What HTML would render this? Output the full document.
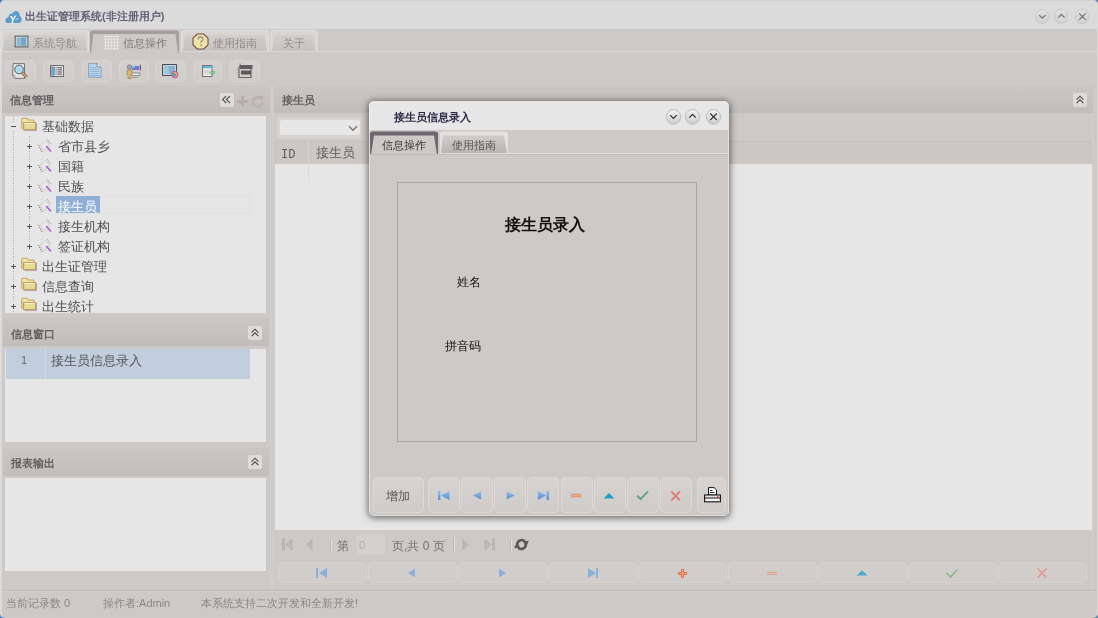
<!DOCTYPE html>
<html><head><meta charset="utf-8">
<style>
*{box-sizing:border-box;margin:0;padding:0}
html,body{width:1098px;height:618px;overflow:hidden;background:#4f7fb3;font-family:"Liberation Sans",sans-serif;}
.a{position:absolute}
svg{position:absolute;overflow:visible}
#win{position:absolute;left:0;top:0;width:1098px;height:618px;background:#cdc9c7;border-radius:5px;overflow:hidden;will-change:transform}
#title{position:absolute;left:0;top:0;width:1098px;height:29px;background:#dbdbdb;border-top:1px solid #d0d0d0}
.ttl{position:absolute;left:25px;top:8px;font-size:11px;font-weight:bold;color:#646276;letter-spacing:0px;white-space:nowrap}
.wc{position:absolute;width:14px;height:14px;border-radius:50%;background:linear-gradient(#e4e4e4,#d6d6d6 55%,#dadada);border:1px solid #c9c9c9;box-shadow:0 1px 1px rgba(0,0,0,.08)}
.tab{position:absolute;font-size:11px;white-space:nowrap}
.tb{position:absolute;top:60px;height:22px;border-radius:5px;background:linear-gradient(#d4d1cf,#cfcccb);border:1px solid #d6d3d1}
.ph{position:absolute;height:27px;background:linear-gradient(#cac6c4,#c1bdbb);}
.ph span{position:absolute;left:8px;top:7px;font-size:11px;font-weight:bold;color:#606060;white-space:nowrap}
.pb{position:absolute;background:#e6e6e6}
.cb{position:absolute;width:14px;height:14px;border-radius:2px;background:#dedcdb}
.sel{color:#fff!important}
.node{position:absolute;font-size:13px;color:#4f4f4f;white-space:nowrap;line-height:14px}
.exp{position:absolute;font-size:11px;color:#555;line-height:10px}
.st{position:absolute;top:596px;font-size:11px;color:#888;white-space:nowrap}
.bb{position:absolute;top:562px;width:89px;height:21px;border-radius:5px;background:#d0cdcb;border:1px solid #d6d3d1}
.mb{position:absolute;top:376px;height:36px;border-radius:5px;background:linear-gradient(#d6d3d1,#cfcbc9);border:1px solid #dcd9d7}
.mc{position:absolute;width:15px;height:15px;border-radius:50%;background:linear-gradient(#f0f0f0,#e2e2e2 50%,#d2d2d2);border:1px solid #bdbdbd;box-shadow:0 1px 1px rgba(0,0,0,.12)}
</style></head><body>
<div id="win">
  <!-- title bar -->
  <div id="title">
    <svg style="left:5px;top:8.5px" width="17" height="14" viewBox="0 0 17 14">
      <path d="M2.5 13 C0.5 13 0 10.5 0.8 9 C1.3 7.8 2.5 7.3 3.3 7.5 C3.5 5 5.3 3.4 7.5 3.6 C8.3 1.5 10.5 0.5 12.5 1.5 C14.5 2.5 15 4.5 14.8 6 C16.5 6.8 17 9 16.5 10.8 C16 12.3 15 13 13.5 13 Z" fill="#5b9ccb"/>
      <path d="M5 6 L7.2 9.5 L6.3 13 L8 13 L8.8 9.5 L11.5 5.5 L9.8 5.5 L8.2 8.2 L6.9 6 Z" fill="#f2f6fa"/>
      <path d="M10.5 9 L13.5 8 L13.5 9.2 L10.5 10 Z" fill="#cfe2f0" opacity=".8"/>
    </svg>
    <div class="ttl">出生证管理系统(非注册用户)</div>
    <div class="wc" style="left:1035px;top:8px"></div>
    <div class="wc" style="left:1054px;top:8px"></div>
    <div class="wc" style="left:1075px;top:8px"></div>
    <svg style="left:1035px;top:8px" width="60" height="15" viewBox="0 0 60 15">
      <path d="M4.2 6.2 L7.4 9.2 L10.6 6.2" fill="none" stroke="#6e6e6e" stroke-width="1.1"/>
      <path d="M23.2 8.6 L26.4 5.4 L29.6 8.6" fill="none" stroke="#6e6e6e" stroke-width="1.1"/>
      <path d="M44.2 4.4 L50.6 10.8 M50.6 4.4 L44.2 10.8" fill="none" stroke="#6e6e6e" stroke-width="1.1"/>
    </svg>
  </div>
  <!-- window side borders -->
  <div class="a" style="left:0;top:29px;width:2px;height:589px;background:#dcdada"></div>
  <!-- tabs -->
  <svg style="left:0;top:29px" width="330" height="25" viewBox="0 0 330 25">
    <!-- tab1 -->
    <path d="M1.5 22 L1.5 4 Q1.5 1.5 4 1.5 L86 1.5 Q88.5 1.5 88.5 4 L88.5 22 Z" fill="#d9d5d3" stroke="#e2dfdd" stroke-width="1"/>
    <path d="M5 6 L84.5 6 L87 22 L2.5 22 Z" fill="url(#gi)"/>
    <!-- tab3 -->
    <path d="M181.5 22 L181.5 4 Q181.5 1.5 184 1.5 L266 1.5 Q268.5 1.5 268.5 4 L268.5 22 Z" fill="#d9d5d3" stroke="#e2dfdd" stroke-width="1"/>
    <path d="M185 6 L264.5 6 L267 22 L182.5 22 Z" fill="url(#gi)"/>
    <!-- tab4 -->
    <path d="M271 22 L271 4 Q271 1.5 273.5 1.5 L314.5 1.5 Q317 1.5 317 4 L317 22 Z" fill="#d9d5d3" stroke="#e2dfdd" stroke-width="1"/>
    <path d="M274.5 6 L313 6 L315.5 22 L272 22 Z" fill="url(#gi)"/>
    <!-- tab2 active -->
    <path d="M90 24 L90 4.5 Q90 1.5 93 1.5 L176 1.5 Q179 1.5 179 4.5 L179 24 Z" fill="#a49f9e"/>
    <path d="M93.5 5 L175.5 5 L178.2 25 L90.8 25 Z" fill="#cdc9c7"/>
    <defs>
      <linearGradient id="gi" x1="0" y1="0" x2="0" y2="1"><stop offset="0" stop-color="#d2cecc"/><stop offset="1" stop-color="#c6c2c0"/></linearGradient>
    </defs>
  </svg>
  <div class="a" style="left:2px;top:51px;width:88px;height:1px;background:#dcd8d6"></div>
  <div class="a" style="left:179px;top:51px;width:918px;height:1px;background:#dcd8d6"></div>
  <!-- tab icons -->
  <svg style="left:14px;top:35px" width="15" height="13" viewBox="0 0 15 13">
    <rect x="0.7" y="0.7" width="13.6" height="11.6" fill="#3e3e3e"/>
    <rect x="1.6" y="1.6" width="11.8" height="9.8" fill="#fafafa"/>
    <rect x="2.4" y="2.4" width="10.4" height="8.4" fill="#8fb8d2"/>
    <rect x="7.5" y="2.4" width="5.3" height="8.4" fill="#6d9db9" opacity=".7"/>
    <rect x="12.2" y="2" width="1" height="9" fill="#a8dcf6"/>
  </svg>
  <div class="tab" style="left:33px;top:36px;color:#8e8c8b">系统导航</div>
  <svg style="left:104px;top:35px" width="15" height="15" viewBox="0 0 15 15">
    <g stroke="#e4e4e4" stroke-width="1.1" opacity=".9">
      <path d="M1.5 0 V15 M4.5 0 V15 M7.5 0 V15 M10.5 0 V15 M13.5 0 V15 M0 1.5 H15 M0 4.5 H15 M0 7.5 H15 M0 10.5 H15 M0 13.5 H15"/>
    </g>
  </svg>
  <div class="tab" style="left:123px;top:36px;color:#7a7878">信息操作</div>
  <svg style="left:192px;top:33px" width="17" height="17" viewBox="0 0 17 17">
    <path d="M5.2 1 H11.8 L16 5.2 V11.8 L11.8 16 H5.2 L1 11.8 V5.2 Z" fill="#f1e2a6" stroke="#6e4a44" stroke-width="1.1"/>
    <path d="M6 6.5 Q6 4 8.5 4 Q11 4 11 6.3 Q11 7.8 9.2 8.6 L9.2 10" fill="none" stroke="#aaa7a0" stroke-width="1.8"/>
    <rect x="8.2" y="11.3" width="2" height="1.9" fill="#aaa7a0"/>
  </svg>
  <div class="tab" style="left:213px;top:36px;color:#8e8c8b">使用指南</div>
  <div class="tab" style="left:283px;top:36px;color:#8e8c8b">关于</div>
  <!-- toolbar buttons -->
  <div class="tb" style="left:5px;width:31px"></div>
  <div class="tb" style="left:43px;width:31px"></div>
  <div class="tb" style="left:81px;width:31px"></div>
  <div class="tb" style="left:119px;width:30px"></div>
  <div class="tb" style="left:155px;width:31px"></div>
  <div class="tb" style="left:193px;width:29px"></div>
  <div class="tb" style="left:229px;width:31px"></div>
  <!-- toolbar icons -->
  <svg style="left:12px;top:63px" width="16" height="16" viewBox="0 0 16 16">
    <path d="M1 0.6 H12.5 V15.4 H3 L0.6 13 Z" fill="#e4e4e2" stroke="#6c6c6c" stroke-width="0.9"/>
    <circle cx="2.2" cy="13.3" r="1.1" fill="#fff" stroke="#666" stroke-width=".6"/>
    <circle cx="7" cy="6.5" r="4.3" fill="#a9dcf0" stroke="#5f5f5f" stroke-width="1"/>
    <path d="M10 9.5 L14.5 14" stroke="#555" stroke-width="3"/>
    <path d="M10.2 9.7 L14.3 13.8" stroke="#f0a070" stroke-width="1.8"/>
  </svg>
  <svg style="left:50px;top:65px" width="14" height="12" viewBox="0 0 14 12">
    <rect x="0.5" y="0.5" width="13" height="11" fill="#e2e2e2" stroke="#6e6e6e" stroke-width="1"/>
    <rect x="1.8" y="2" width="2.6" height="8.2" fill="#5eaee0" stroke="#6a6a6a" stroke-width=".5"/>
    <g fill="#555"><rect x="5.6" y="2.3" width="1" height="1"/><rect x="5.6" y="4.4" width="1" height="1"/><rect x="5.6" y="6.5" width="1" height="1"/><rect x="5.6" y="8.6" width="1" height="1"/>
    <rect x="7.4" y="2.3" width="4.6" height="1"/><rect x="7.4" y="4.4" width="4.6" height="1"/><rect x="7.4" y="6.5" width="4.6" height="1"/><rect x="7.4" y="8.6" width="4.6" height="1"/></g>
  </svg>
  <svg style="left:88px;top:63px" width="14" height="15" viewBox="0 0 14 15">
    <path d="M0.6 0.6 H9 L13 4 V14.2 H0.6 Z" fill="#b7d6ee" stroke="#8a9aa8" stroke-width=".9"/>
    <path d="M9 0.6 V4 H13" fill="#fff" stroke="#6a6a6a" stroke-width=".8"/>
    <g stroke="#8fb6d8" stroke-width="1"><path d="M2 4.5 H8 M2 6.5 H11 M2 8.5 H11 M2 10.5 H11 M2 12.5 H11"/></g>
  </svg>
  <svg style="left:126px;top:64px" width="16" height="15" viewBox="0 0 16 15">
    <path d="M6 2 H13.5 V6 H6 Z" fill="#7f70d8"/>
    <path d="M6 2 H9 V4 H6 Z" fill="#59c8e8"/>
    <path d="M14.5 0.5 V6.5" stroke="#666" stroke-width="1"/>
    <path d="M6 9 H14 V11.5 H6" fill="#ececec" stroke="#777" stroke-width=".8"/>
    <path d="M6 13.5 H12" stroke="#999" stroke-width="1"/>
    <circle cx="3.5" cy="3" r="2.2" fill="#a8a8a8" stroke="#666" stroke-width=".6"/>
    <path d="M1 6 H6 V10.5 H5 V14.5 H2 V10.5 H1 Z" fill="#dcb770" stroke="#7a6a40" stroke-width=".5"/>
  </svg>
  <svg style="left:162px;top:64px" width="17" height="14" viewBox="0 0 17 14">
    <rect x="0.6" y="0.6" width="13.8" height="10.8" fill="#fff" stroke="#3e3e3e" stroke-width="1"/>
    <rect x="1.6" y="1.6" width="11.8" height="8.8" fill="#86b4d0"/>
    <rect x="1.6" y="1.6" width="5" height="8.8" fill="#a9cde0" opacity=".7"/>
    <circle cx="12.8" cy="10.6" r="3.3" fill="#d8b050" stroke="#cc33cc" stroke-width=".8"/>
    <path d="M10.5 9 Q12.5 8.5 14 11 Q13 13 11 12.5 Z" fill="#4a90c8"/>
  </svg>
  <svg style="left:202px;top:65px" width="13" height="12" viewBox="0 0 13 12">
    <rect x="0.5" y="0.5" width="9.5" height="11" fill="#e8e8e8" stroke="#6e6e6e" stroke-width=".9"/>
    <rect x="1" y="1" width="8.6" height="2.2" fill="#62b4e4"/>
    <path d="M1.5 6 H8 M1.5 8 H8" stroke="#b8b8b8" stroke-width=".8"/>
    <path d="M8 7.5 L10.3 5 V6.5 H12.5 V8.5 H10.3 V10 Z" fill="#7cd08a" stroke="#3a9a4a" stroke-width=".4"/>
  </svg>
  <svg style="left:236px;top:63px" width="17" height="16" viewBox="0 0 17 16">
    <path d="M4 0.6 V4" stroke="#666" stroke-width="1"/>
    <rect x="4" y="2" width="12.5" height="4" fill="#5e5e5e"/>
    <path d="M4 4 H3 V14.5 H15 V6" fill="none" stroke="#666" stroke-width="1.2"/>
    <rect x="5" y="7.5" width="10" height="4" fill="#5a5a5a"/>
    <path d="M0.5 7 H1.5 M0.8 9.5 H1.6" stroke="#888" stroke-width=".8"/>
  </svg>
  <!-- LEFT PANEL: 信息管理 -->
  <div class="ph" style="left:2px;top:86px;width:268px"><span>信息管理</span></div>
  <div class="cb" style="left:220px;top:93px"></div>
  <svg style="left:220px;top:93px" width="14" height="14" viewBox="0 0 14 14">
    <path d="M6.2 3.2 L2.6 6.6 L6.2 10 M10 3.2 L6.4 6.6 L10 10" fill="none" stroke="#4a4a4a" stroke-width="1.1"/>
  </svg>
  <svg style="left:236px;top:95px" width="28" height="14" viewBox="0 0 28 14">
    <path d="M1 6.5 H12 M6.5 1 V12" stroke="#b8abaa" stroke-width="2.6"/>
    <path d="M26.3 7.5 A4.8 4.8 0 1 1 24.6 3.3" fill="none" stroke="#bcb0ae" stroke-width="2"/>
    <path d="M22 1.5 L27.5 0.5 L26.5 6 Z" fill="#bcb0ae"/>
  </svg>
  <div class="pb" style="left:5px;top:116px;width:261px;height:197px;overflow:hidden">
<svg style="left:8px;top:0px" width="2" height="200" viewBox="0 0 2 200"><path d="M0.5 0 V6 M0.5 15 V146 M0.5 155 V166 M0.5 175 V186 M0.5 195 V197" stroke="#a8a8a8" stroke-width="1" stroke-dasharray="1 1.6"/></svg>
<svg style="left:24px;top:20px" width="2" height="120" viewBox="0 0 2 120"><path d="M0.5 0 V6 M0.5 15 V26 M0.5 35 V46 M0.5 55 V66 M0.5 75 V86 M0.5 95 V106" stroke="#a8a8a8" stroke-width="1" stroke-dasharray="1 1.6"/></svg>
<svg style="left:6px;top:8px" width="6" height="6" viewBox="0 0 6 6"><path d="M0 2.5 H5" stroke="#555" stroke-width="1"/></svg>
<svg style="left:16px;top:1px" width="16" height="14" viewBox="0 0 16 14"><path d="M0.8 12 V2.5 Q0.8 1.2 2 1.2 H5.5 Q6.5 1.2 7 2.5 L7.3 3 H12 Q13 3 13 4 V6" fill="#efe6a8" stroke="#c9a464" stroke-width="1.1"/><rect x="2.6" y="5.6" width="12" height="7" fill="#e6dc98" stroke="#c49a58" stroke-width="1.1"/><path d="M3.3 6.5 H14" stroke="#f6f2d8" stroke-width="1"/><path d="M15.5 6 V13.6 H3.5" fill="none" stroke="#777" stroke-width=".9" opacity=".55"/></svg>
<div class="node " style="left:37px;top:3.5px">基础数据</div>
<svg style="left:22px;top:28px" width="6" height="6" viewBox="0 0 6 6"><path d="M0 2.5 H5 M2.5 0 V5" stroke="#555" stroke-width="1"/></svg>
<svg style="left:32px;top:23px" width="15" height="14" viewBox="0 0 15 14"><path d="M2 7 L8 0.8 L10 1.5 L13.5 5.5 L13 7 L7.5 13.5 L5 13 Z" fill="#dadada"/><path d="M4 7 L8.5 2.5 L11.5 5.5 L7 10.5 Z" fill="#e9e9e9"/><path d="M1.5 6 L4.8 12.8" stroke="#6e6e6e" stroke-width="1" stroke-dasharray="1 1.2"/><path d="M10.5 0.5 L13.8 5.5" stroke="#8a8a8a" stroke-width="1" stroke-dasharray="1 1"/><path d="M9.6 7.6 L13.6 12" stroke="#a555e6" stroke-width="1.5" stroke-linecap="round"/></svg>
<div class="node " style="left:53px;top:23.5px">省市县乡</div>
<svg style="left:22px;top:48px" width="6" height="6" viewBox="0 0 6 6"><path d="M0 2.5 H5 M2.5 0 V5" stroke="#555" stroke-width="1"/></svg>
<svg style="left:32px;top:43px" width="15" height="14" viewBox="0 0 15 14"><path d="M2 7 L8 0.8 L10 1.5 L13.5 5.5 L13 7 L7.5 13.5 L5 13 Z" fill="#dadada"/><path d="M4 7 L8.5 2.5 L11.5 5.5 L7 10.5 Z" fill="#e9e9e9"/><path d="M1.5 6 L4.8 12.8" stroke="#6e6e6e" stroke-width="1" stroke-dasharray="1 1.2"/><path d="M10.5 0.5 L13.8 5.5" stroke="#8a8a8a" stroke-width="1" stroke-dasharray="1 1"/><path d="M9.6 7.6 L13.6 12" stroke="#a555e6" stroke-width="1.5" stroke-linecap="round"/></svg>
<div class="node " style="left:53px;top:43.5px">国籍</div>
<svg style="left:22px;top:68px" width="6" height="6" viewBox="0 0 6 6"><path d="M0 2.5 H5 M2.5 0 V5" stroke="#555" stroke-width="1"/></svg>
<svg style="left:32px;top:63px" width="15" height="14" viewBox="0 0 15 14"><path d="M2 7 L8 0.8 L10 1.5 L13.5 5.5 L13 7 L7.5 13.5 L5 13 Z" fill="#dadada"/><path d="M4 7 L8.5 2.5 L11.5 5.5 L7 10.5 Z" fill="#e9e9e9"/><path d="M1.5 6 L4.8 12.8" stroke="#6e6e6e" stroke-width="1" stroke-dasharray="1 1.2"/><path d="M10.5 0.5 L13.8 5.5" stroke="#8a8a8a" stroke-width="1" stroke-dasharray="1 1"/><path d="M9.6 7.6 L13.6 12" stroke="#a555e6" stroke-width="1.5" stroke-linecap="round"/></svg>
<div class="node " style="left:53px;top:63.5px">民族</div>
<svg style="left:22px;top:88px" width="6" height="6" viewBox="0 0 6 6"><path d="M0 2.5 H5 M2.5 0 V5" stroke="#555" stroke-width="1"/></svg>
<svg style="left:32px;top:83px" width="15" height="14" viewBox="0 0 15 14"><path d="M2 7 L8 0.8 L10 1.5 L13.5 5.5 L13 7 L7.5 13.5 L5 13 Z" fill="#dadada"/><path d="M4 7 L8.5 2.5 L11.5 5.5 L7 10.5 Z" fill="#e9e9e9"/><path d="M1.5 6 L4.8 12.8" stroke="#6e6e6e" stroke-width="1" stroke-dasharray="1 1.2"/><path d="M10.5 0.5 L13.8 5.5" stroke="#8a8a8a" stroke-width="1" stroke-dasharray="1 1"/><path d="M9.6 7.6 L13.6 12" stroke="#a555e6" stroke-width="1.5" stroke-linecap="round"/></svg>
<div class="a" style="left:51px;top:80px;width:194px;height:18px;border:1px solid #e0e0e0;border-left:none"></div>
<div class="a" style="left:51px;top:80px;width:44px;height:17px;background:#8fafd6"></div>
<div class="node sel" style="left:53px;top:83.5px">接生员</div>
<svg style="left:22px;top:108px" width="6" height="6" viewBox="0 0 6 6"><path d="M0 2.5 H5 M2.5 0 V5" stroke="#555" stroke-width="1"/></svg>
<svg style="left:32px;top:103px" width="15" height="14" viewBox="0 0 15 14"><path d="M2 7 L8 0.8 L10 1.5 L13.5 5.5 L13 7 L7.5 13.5 L5 13 Z" fill="#dadada"/><path d="M4 7 L8.5 2.5 L11.5 5.5 L7 10.5 Z" fill="#e9e9e9"/><path d="M1.5 6 L4.8 12.8" stroke="#6e6e6e" stroke-width="1" stroke-dasharray="1 1.2"/><path d="M10.5 0.5 L13.8 5.5" stroke="#8a8a8a" stroke-width="1" stroke-dasharray="1 1"/><path d="M9.6 7.6 L13.6 12" stroke="#a555e6" stroke-width="1.5" stroke-linecap="round"/></svg>
<div class="node " style="left:53px;top:103.5px">接生机构</div>
<svg style="left:22px;top:128px" width="6" height="6" viewBox="0 0 6 6"><path d="M0 2.5 H5 M2.5 0 V5" stroke="#555" stroke-width="1"/></svg>
<svg style="left:32px;top:123px" width="15" height="14" viewBox="0 0 15 14"><path d="M2 7 L8 0.8 L10 1.5 L13.5 5.5 L13 7 L7.5 13.5 L5 13 Z" fill="#dadada"/><path d="M4 7 L8.5 2.5 L11.5 5.5 L7 10.5 Z" fill="#e9e9e9"/><path d="M1.5 6 L4.8 12.8" stroke="#6e6e6e" stroke-width="1" stroke-dasharray="1 1.2"/><path d="M10.5 0.5 L13.8 5.5" stroke="#8a8a8a" stroke-width="1" stroke-dasharray="1 1"/><path d="M9.6 7.6 L13.6 12" stroke="#a555e6" stroke-width="1.5" stroke-linecap="round"/></svg>
<div class="node " style="left:53px;top:123.5px">签证机构</div>
<svg style="left:6px;top:148px" width="6" height="6" viewBox="0 0 6 6"><path d="M0 2.5 H5 M2.5 0 V5" stroke="#555" stroke-width="1"/></svg>
<svg style="left:16px;top:141px" width="16" height="14" viewBox="0 0 16 14"><path d="M0.8 12 V2.5 Q0.8 1.2 2 1.2 H5.5 Q6.5 1.2 7 2.5 L7.3 3 H12 Q13 3 13 4 V6" fill="#efe6a8" stroke="#c9a464" stroke-width="1.1"/><rect x="2.6" y="5.6" width="12" height="7" fill="#e6dc98" stroke="#c49a58" stroke-width="1.1"/><path d="M3.3 6.5 H14" stroke="#f6f2d8" stroke-width="1"/><path d="M15.5 6 V13.6 H3.5" fill="none" stroke="#777" stroke-width=".9" opacity=".55"/></svg>
<div class="node " style="left:37px;top:143.5px">出生证管理</div>
<svg style="left:6px;top:168px" width="6" height="6" viewBox="0 0 6 6"><path d="M0 2.5 H5 M2.5 0 V5" stroke="#555" stroke-width="1"/></svg>
<svg style="left:16px;top:161px" width="16" height="14" viewBox="0 0 16 14"><path d="M0.8 12 V2.5 Q0.8 1.2 2 1.2 H5.5 Q6.5 1.2 7 2.5 L7.3 3 H12 Q13 3 13 4 V6" fill="#efe6a8" stroke="#c9a464" stroke-width="1.1"/><rect x="2.6" y="5.6" width="12" height="7" fill="#e6dc98" stroke="#c49a58" stroke-width="1.1"/><path d="M3.3 6.5 H14" stroke="#f6f2d8" stroke-width="1"/><path d="M15.5 6 V13.6 H3.5" fill="none" stroke="#777" stroke-width=".9" opacity=".55"/></svg>
<div class="node " style="left:37px;top:163.5px">信息查询</div>
<svg style="left:6px;top:188px" width="6" height="6" viewBox="0 0 6 6"><path d="M0 2.5 H5 M2.5 0 V5" stroke="#555" stroke-width="1"/></svg>
<svg style="left:16px;top:181px" width="16" height="14" viewBox="0 0 16 14"><path d="M0.8 12 V2.5 Q0.8 1.2 2 1.2 H5.5 Q6.5 1.2 7 2.5 L7.3 3 H12 Q13 3 13 4 V6" fill="#efe6a8" stroke="#c9a464" stroke-width="1.1"/><rect x="2.6" y="5.6" width="12" height="7" fill="#e6dc98" stroke="#c49a58" stroke-width="1.1"/><path d="M3.3 6.5 H14" stroke="#f6f2d8" stroke-width="1"/><path d="M15.5 6 V13.6 H3.5" fill="none" stroke="#777" stroke-width=".9" opacity=".55"/></svg>
<div class="node " style="left:37px;top:183.5px">出生统计</div>  </div>
  <!-- 信息窗口 -->
  <div class="ph" style="left:3px;top:318px;width:266px;height:28px"><span style="top:9px">信息窗口</span></div>
  <div class="cb" style="left:248px;top:326px"></div>
  <svg style="left:248px;top:326px" width="14" height="14" viewBox="0 0 14 14"><path d="M3.6 6.6 L7 3.2 L10.4 6.6 M3.6 10.2 L7 6.8 L10.4 10.2" fill="none" stroke="#484848" stroke-width="1.1"/></svg>
  <div class="pb" style="left:5px;top:349px;width:261px;height:93px"></div>
  <div class="a" style="left:6px;top:349px;width:244px;height:30px;background:#c2cedd"></div>
  <div class="a" style="left:45px;top:349px;width:1px;height:30px;background:#d2dae4"></div>
  <div class="a" style="left:21px;top:354px;font-size:11px;color:#666">1</div>
  <div class="a" style="left:51px;top:352px;font-size:13px;color:#555;white-space:nowrap">接生员信息录入</div>
  <!-- 报表输出 -->
  <div class="ph" style="left:3px;top:448px;width:266px;height:28px"><span style="top:8px">报表输出</span></div>
  <div class="cb" style="left:248px;top:455px"></div>
  <svg style="left:248px;top:455px" width="14" height="14" viewBox="0 0 14 14"><path d="M3.6 6.6 L7 3.2 L10.4 6.6 M3.6 10.2 L7 6.8 L10.4 10.2" fill="none" stroke="#484848" stroke-width="1.1"/></svg>
  <div class="pb" style="left:5px;top:478px;width:261px;height:93px"></div>
  <!-- divider between panels -->
  <div class="a" style="left:270px;top:86px;width:4px;height:505px;background:#d0ccca"></div>
  <!-- RIGHT PANEL -->
  <div class="ph" style="left:274px;top:86px;width:819px"><span>接生员</span></div>
  <div class="cb" style="left:1073px;top:93px"></div>
  <svg style="left:1073px;top:93px" width="14" height="14" viewBox="0 0 14 14"><path d="M3.6 6.6 L7 3.2 L10.4 6.6 M3.6 10.2 L7 6.8 L10.4 10.2" fill="none" stroke="#484848" stroke-width="1.1"/></svg>
  <div class="a" style="left:277px;top:117px;width:85px;height:22px;border-radius:4px;background:#d5d2d0"></div>
  <div class="a" style="left:280px;top:120px;width:80px;height:15px;border-radius:2px;background:#e7e7e7"></div>
  <svg style="left:348px;top:125px" width="10" height="7" viewBox="0 0 10 7"><path d="M1 1.2 L5 5.2 L9 1.2" fill="none" stroke="#777" stroke-width="1.4"/></svg>
  <div class="a" style="left:275px;top:141px;width:817px;height:23px;background:#cbc7c5;border:1px solid #c5c1bf;border-bottom:none"></div>
  <div class="a" style="left:308px;top:141px;width:1px;height:23px;background:#d6d2d0"></div>
  <div class="a" style="left:281px;top:148px;font-family:'Liberation Mono',monospace;font-size:12px;color:#5e5e5e">ID</div>
  <div class="a" style="left:316px;top:144px;font-size:13px;color:#5e5e5e;white-space:nowrap">接生员</div>
  <div class="pb" style="left:275px;top:164px;width:817px;height:366px"></div>
  <div class="a" style="left:308px;top:164px;width:1px;height:19px;background:#dcdcdc"></div>
  <div class="a" style="left:1092px;top:113px;width:1px;height:477px;background:#d3cfcd"></div>
  <!-- pager -->
  <svg style="left:280px;top:537px" width="260" height="16" viewBox="0 0 260 16">
    <g fill="#bdbab8" stroke="#a8a5a3" stroke-width=".5">
      <rect x="2.5" y="2" width="2" height="11"/>
      <path d="M12 2 L6 7.5 L12 13 Z"/>
      <path d="M32 2.5 L27 7.5 L32 12.5 Z"/>
      <path d="M183 2.5 L188 7.5 L183 12.5 Z"/>
      <path d="M205 2.5 L211 7.5 L205 13 Z"/>
      <rect x="212.5" y="2" width="2" height="11"/>
    </g>
    <g stroke="#bdb9b7" stroke-width="1"><path d="M50.5 1 V14 M173.5 1 V14 M230.5 1 V14"/></g>
    <g stroke="#e2dedc" stroke-width="1"><path d="M51.5 1 V14 M174.5 1 V14 M231.5 1 V14"/></g>
    <path d="M237.4 8.6 A4.4 4.4 0 0 1 244.8 4.4" fill="none" stroke="#585858" stroke-width="2.6"/>
    <path d="M245.6 6.4 A4.4 4.4 0 0 1 238.2 10.6" fill="none" stroke="#585858" stroke-width="2.6"/>
    <path d="M242.8 4.6 L248.8 3.8 L246.4 9.4 Z" fill="#585858"/>
    <path d="M240.2 10.4 L234.2 11.2 L236.6 5.6 Z" fill="#585858"/>
  </svg>
  <div class="a" style="left:337px;top:538px;font-size:12px;color:#707070">第</div>
  <div class="a" style="left:356px;top:534px;width:30px;height:22px;border-radius:3px;background:#d3d0ce;border:1px solid #cfcbc9"></div>
  <div class="a" style="left:359px;top:539px;font-size:11px;color:#b0adab">0</div>
  <div class="a" style="left:392px;top:538px;font-size:12px;color:#707070;white-space:nowrap">页,共 0 页</div>
  <!-- bottom button row -->
  <div class="bb" style="left:278px"></div>
  <div class="bb" style="left:368px"></div>
  <div class="bb" style="left:458px"></div>
  <div class="bb" style="left:548px"></div>
  <div class="bb" style="left:638px"></div>
  <div class="bb" style="left:728px"></div>
  <div class="bb" style="left:818px"></div>
  <div class="bb" style="left:908px"></div>
  <div class="bb" style="left:998px"></div>
  <svg style="left:278px;top:562px" width="810" height="21" viewBox="0 0 810 21">
    <g fill="#8bb0da">
      <rect x="38" y="6" width="2" height="10"/><path d="M49 6 L41 11 L49 16 Z"/>
      <path d="M137 6.5 L130 11 L137 15.5 Z"/>
      <path d="M221 6.5 L228 11 L221 15.5 Z"/>
      <path d="M310 6 L318 11 L310 16 Z"/><rect x="318" y="6" width="2" height="10"/>
    </g>
    <path d="M404.5 7 V16 M400 11.5 H409" stroke="#dc7450" stroke-width="3"/><path d="M404.5 7.6 V15.4 M400.6 11.5 H408.4" stroke="#f0a47a" stroke-width="1"/>
    <path d="M489 10.3 H499 M489 12.3 H499" stroke="#e2a48a" stroke-width="1.3"/>
    <path d="M578.5 13.5 L584 8.5 L589.5 13.5 Z" fill="#4aa8c8"/>
    <path d="M668.5 11 L672.5 15 L679.5 7.5" fill="none" stroke="#8fb890" stroke-width="1.7"/>
    <path d="M759.5 6.5 L768.5 15.5 M768.5 6.5 L759.5 15.5" stroke="#e29a94" stroke-width="1.6"/>
  </svg>
  <!-- status bar -->
  <div class="a" style="left:2px;top:590px;width:1095px;height:1px;background:#bebab8"></div>
  <div class="a" style="left:2px;top:591px;width:1095px;height:1px;background:#d6d2d0"></div>
  <div class="st" style="left:6px">当前记录数 0</div>
  <div class="st" style="left:103px">操作者:Admin</div>
  <div class="st" style="left:201px">本系统支持二次开发和全新开发!</div>
  <div class="a" style="left:1097px;top:29px;width:1px;height:589px;background:#dcdcdc"></div>
</div>
<!-- dim overlay? none -->
<!-- MODAL -->
<div class="a" style="will-change:transform;left:369px;top:101px;width:360px;height:415px;border-radius:5px;background:#cdc9c7;box-shadow:0 1px 7px 1px rgba(0,0,0,.55);overflow:hidden">
  <div class="a" style="left:0;top:0;width:360px;height:29px;background:#e7e7e7"></div>
  <div class="a" style="left:25px;top:9px;font-size:11px;font-weight:bold;color:#2b2a48;white-space:nowrap">接生员信息录入</div>
  <div class="mc" style="left:297px;top:8px"></div>
  <div class="mc" style="left:316px;top:8px"></div>
  <div class="mc" style="left:337px;top:8px"></div>
  <svg style="left:297px;top:8px" width="60" height="15" viewBox="0 0 60 15">
    <path d="M4.2 6.2 L7.5 9.5 L10.8 6.2" fill="none" stroke="#2e2e2e" stroke-width="1.2"/>
    <path d="M23.2 8.6 L26.5 5.3 L29.8 8.6" fill="none" stroke="#2e2e2e" stroke-width="1.2"/>
    <path d="M44.2 4.5 L50.8 11.1 M50.8 4.5 L44.2 11.1" fill="none" stroke="#2e2e2e" stroke-width="1.2"/>
  </svg>
  <svg style="left:0;top:29px" width="360" height="26" viewBox="0 0 360 26">
    <path d="M71 23 L71 4 Q71 1.5 73.5 1.5 L136.5 1.5 Q139 1.5 139 4 L139 23 Z" fill="#e4e0de"/>
    <path d="M74 5.5 L135 5.5 L138 23 L72 23 Z" fill="url(#gm)"/>
    <path d="M1 25 L1 4 Q1 1.5 3.5 1.5 L66 1.5 Q69 1.5 69 4 L69 25 Z" fill="#6f6770"/>
    <path d="M5 5.5 L65 5.5 L68 25 L2 25 Z" fill="#cdc9c7"/>
    <defs><linearGradient id="gm" x1="0" y1="0" x2="0" y2="1"><stop offset="0" stop-color="#d0cccb"/><stop offset="1" stop-color="#b9b5b3"/></linearGradient></defs>
  </svg>
  <div class="a" style="left:69px;top:52px;width:291px;height:1px;background:#e2dedc"></div>
  <div class="a" style="left:0px;top:53px;width:360px;height:1px;background:#bfbbb9"></div>
  <div class="a" style="left:13px;top:37px;font-size:11px;color:#333;white-space:nowrap">信息操作</div>
  <div class="a" style="left:83px;top:37px;font-size:11px;color:#555;white-space:nowrap">使用指南</div>
  <div class="a" style="left:0;top:0;width:1px;height:415px;background:rgba(255,255,255,.5)"></div>
  <div class="a" style="left:359px;top:29px;width:1px;height:386px;background:#e2dedc"></div>
  <div class="a" style="left:0;top:414px;width:360px;height:1px;background:#dcd8d6"></div>
  <!-- form box -->
  <div class="a" style="left:28px;top:81px;width:300px;height:260px;border:1px solid #a9a5a3"></div>
  <div class="a" style="left:136px;top:114px;font-size:16px;font-weight:bold;color:#111;white-space:nowrap">接生员录入</div>
  <div class="a" style="left:88px;top:173px;font-size:12px;color:#111;white-space:nowrap">姓名</div>
  <div class="a" style="left:76px;top:237px;font-size:12px;color:#111;white-space:nowrap">拼音码</div>
  <!-- buttons -->
  <div class="mb" style="left:4px;width:51px"></div>
  <div class="a" style="left:17px;top:387px;font-size:12px;color:#555;white-space:nowrap">增加</div>
  <div class="mb" style="left:59px;width:32px"></div>
  <div class="mb" style="left:92px;width:32px"></div>
  <div class="mb" style="left:125px;width:32px"></div>
  <div class="mb" style="left:158px;width:32px"></div>
  <div class="mb" style="left:192px;width:32px"></div>
  <div class="mb" style="left:225px;width:32px"></div>
  <div class="mb" style="left:258px;width:32px"></div>
  <div class="mb" style="left:291px;width:32px"></div>
  <div class="mb" style="left:328px;width:29px"></div>
  <svg style="left:0px;top:376px" width="360" height="36" viewBox="0 0 360 36">
    <defs><linearGradient id="bl" x1="0" y1="0" x2="0" y2="1"><stop offset="0" stop-color="#8cbcec"/><stop offset="1" stop-color="#5a90d0"/></linearGradient></defs>
    <g fill="url(#bl)">
      <rect x="69" y="14" width="2.4" height="9"/><path d="M80.5 14 L72 18.5 L80.5 23 Z"/>
      <path d="M112 14.5 L104 18.5 L112 22.5 Z"/>
      <path d="M137.7 14.5 L145.7 18.5 L137.7 22.5 Z"/>
      <path d="M168.8 14 L177.3 18.5 L168.8 23 Z"/><rect x="177.6" y="14" width="2.4" height="9"/>
    </g>
    <path d="M202 17.5 H212.3 M202 19.5 H212.3" stroke="#e8946c" stroke-width="1.6"/>
    <path d="M234.6 21.5 L240 16 L245.3 21.5 Z" fill="#22a0c4"/>
    <path d="M268 18.5 L271.5 22 L279 14.5" fill="none" stroke="#68a87e" stroke-width="2"/>
    <path d="M302.3 14.5 L311 23.3 M311 14.5 L302.3 23.3" stroke="#e07a72" stroke-width="1.8"/>
    <g transform="translate(335,10)">
      <path d="M4.5 0.6 H10 L12.5 3 V8 H4.5 Z" fill="#fff" stroke="#111" stroke-width="1"/>
      <path d="M6 3.5 H8.5 M6 5.5 H10.5" stroke="#111" stroke-width=".9"/>
      <rect x="0.6" y="8" width="15.8" height="6.8" fill="#f4f4f4" stroke="#111" stroke-width="1.1"/>
      <path d="M1 11 H16" stroke="#111" stroke-width="1"/>
      <path d="M2 9.8 H12" stroke="#999" stroke-width=".6" stroke-dasharray="1 1"/>
      <rect x="13.2" y="9" width="1.4" height="1.4" fill="#e02020"/>
      <path d="M1 15.3 H2 M15 15.3 H16" stroke="#b0b040" stroke-width=".8"/>
    </g>
  </svg>
</div>
</body></html>
